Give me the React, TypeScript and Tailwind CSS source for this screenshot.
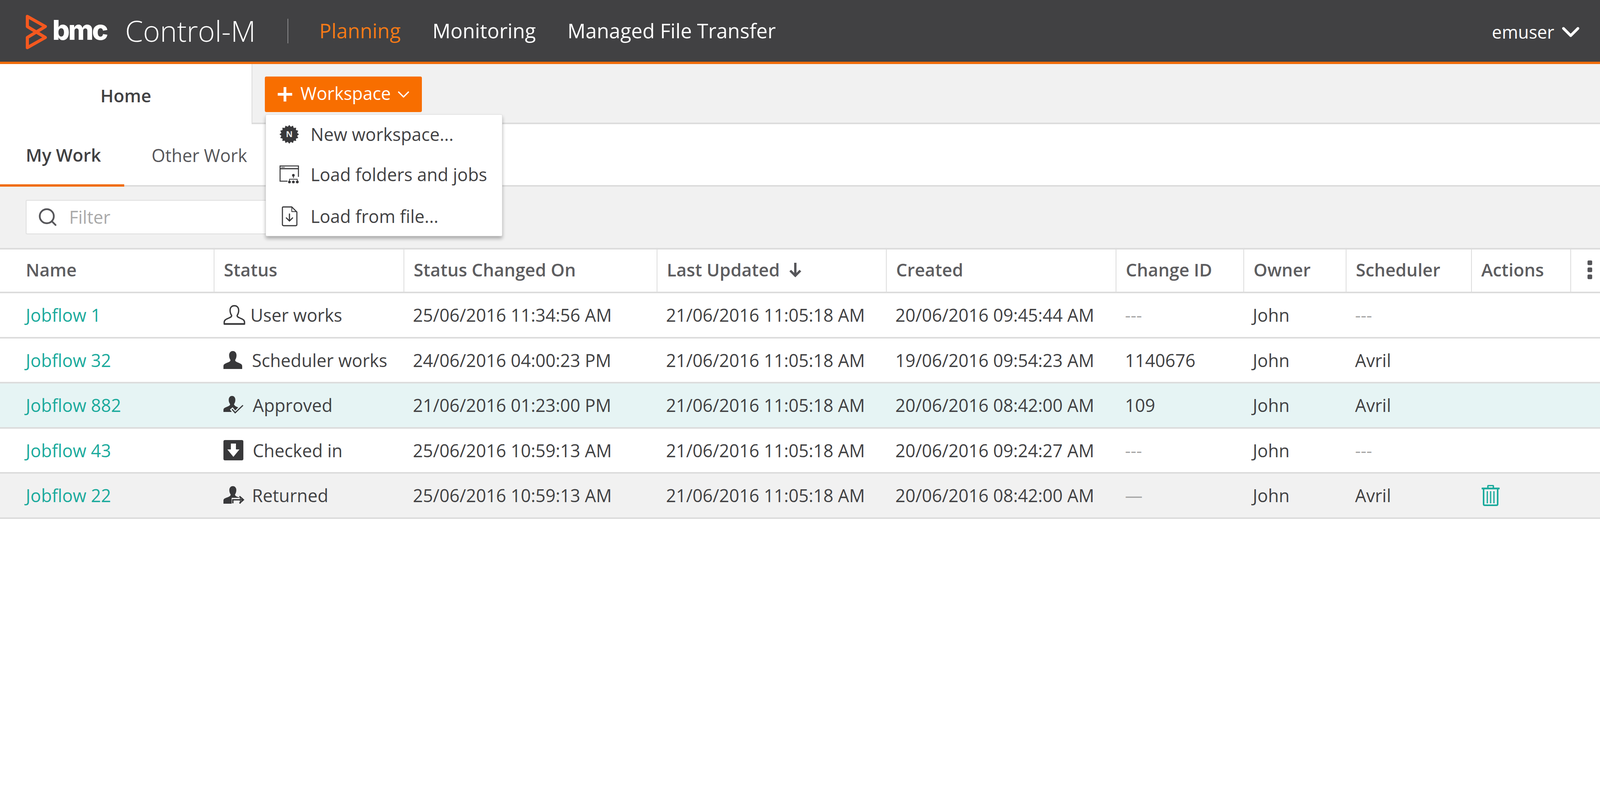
import React from 'react';
import { ChevronDown, Search } from 'lucide-react';

const dark = '#38383a';

function Logo() {
  return (
    <svg viewBox="0 0 58 96" className="w-[58px] h-[96px] shrink-0 mt-[10px]" fill="none" stroke="#f4581f" strokeWidth="8" strokeLinejoin="round">
      <path d="M6 6 L52 32 L6 60 L6 86 L52 60 L6 32 Z" />
    </svg>
  );
}

function Starburst() {
  const points: string[] = [];
  for (let i = 0; i < 32; i++) {
    const r = i % 2 === 0 ? 25 : 20.5;
    const a = (i * Math.PI) / 16;
    points.push(`${25.5 + r * Math.sin(a)},${24 - r * Math.cos(a) * 0.96}`);
  }
  return (
    <svg viewBox="0 0 51 48" className="w-[51px] h-[48px]">
      <polygon points={points.join(' ')} fill={dark} />
      <text x="25.5" y="31" textAnchor="middle" fontSize="21" fontWeight="700" fill="#e8e8e8" fontFamily="Open Sans, sans-serif">N</text>
    </svg>
  );
}

function WindowTree() {
  return (
    <svg viewBox="0 0 51 48" className="w-[51px] h-[48px]" fill="none" stroke={dark} strokeWidth="2.6">
      <path d="M21 41 H2 V2 H49 V30" />
      <path d="M2 9 H49" strokeWidth="3" />
      <path d="M5 5.5 H14" strokeWidth="1.4" />
      <path d="M36 24 V33 M26 41 V36 H46 V41" strokeWidth="1.8" />
      <g fill={dark} stroke="none">
        <circle cx="36" cy="26" r="3.4" />
        <circle cx="26" cy="43" r="3.6" />
        <circle cx="36" cy="43" r="3.6" />
        <circle cx="46" cy="43" r="3.6" />
      </g>
    </svg>
  );
}

function FileIn() {
  return (
    <svg viewBox="0 0 42 52" className="w-[42px] h-[52px]" fill="none" stroke={dark} strokeWidth="2.8" strokeLinejoin="round">
      <path d="M3 4 Q3 2 5 2 H27 L40 15 V47 Q40 50 37 50 H6 Q3 50 3 47 Z" />
      <path d="M27 3 V14 H39" strokeWidth="2" />
      <path d="M21 20 V37 M13 30 L21 38 L29 30" strokeWidth="3" strokeLinecap="round" />
    </svg>
  );
}

const userPath =
  'M28 2 C20 2 17 8 17 14 C17 20 19 24 21 27 C21 30 19 31 15 33 C8 36 2 38 2 44 V49 H54 V44 C54 38 48 36 41 33 C37 31 35 30 35 27 C37 24 39 20 39 14 C39 8 36 2 28 2 Z';

const solidPath =
  'M24 0 C17 0 14.500 6 14.500 11 C14.500 16 16 20 18 23 C18 26 16 27.500 12 29 C5 32 0 33 0 39 V46 H48 V39 C48 33 43 32 36 29 C32 27.500 30 26 30 23 C32 20 33.500 16 33.500 11 C33.500 6 31 0 24 0 Z';

function UserOutline() {
  return (
    <svg viewBox="0 0 56 51" className="w-[56px] h-[51px]" fill="none" stroke={dark} strokeWidth="3.4" strokeLinejoin="round">
      <path d={userPath} />
      <path d="M2 48.500 H54" strokeWidth="4" />
    </svg>
  );
}

function UserSolid() {
  return (
    <svg viewBox="0 0 48 46" className="w-[48px] h-[46px]">
      <path d={solidPath} fill={dark} />
    </svg>
  );
}

function UserApproved() {
  return (
    <svg viewBox="0 0 52 48" className="w-[52px] h-[48px]">
      <path d="M22 0 C16 0 13.500 5 13.500 10 C13.500 15 15 18 17 21 C17 24 15 25 11 27 C5 29.500 0 31 0 36 V41 H40 V30 C34 28 28 26 27 21 C29 18 30.500 15 30.500 10 C30.500 5 28 0 22 0 Z" fill={dark} />
      <path d="M20 32 L30 44 L50 23" fill="none" stroke="#e6f4f4" strokeWidth="9" />
      <path d="M22 34 L30 43 L50 24" fill="none" stroke={dark} strokeWidth="3" />
    </svg>
  );
}

function SquareDown() {
  return (
    <svg viewBox="0 0 51 52" className="w-[51px] h-[52px]">
      <rect x="0" y="0" width="51" height="52" rx="4" fill={dark} />
      <path d="M19 9 H32 V24 H41 L25.500 43 L10 24 H19 Z" fill="#fff" />
    </svg>
  );
}

function UserReturned() {
  return (
    <svg viewBox="0 0 55 47" className="w-[55px] h-[47px]">
      <path d="M24 0 C18 0 15 5 15 10 C15 15 16.500 18.500 18.500 21.500 C18.500 24.500 16.500 26 12 28 C5 30.500 0 32 0 37 V45 H44 V30 C36 28 30 26 29.500 21.500 C31.500 18.500 33 15 33 10 C33 5 30 0 24 0 Z" fill={dark} />
      <path d="M21 30 H42 V48 H21 Z" fill="#f1f1f1" />
      <path d="M24 44 V35 H50 M41 26 L51 35 L41 44" fill="none" stroke={dark} strokeWidth="3.6" />
    </svg>
  );
}

function Trash() {
  return (
    <svg viewBox="0 0 46 54" className="w-[46px] h-[54px]" fill="none" stroke="#1aaa9c" strokeWidth="3.6">
      <path d="M16 7 V3 Q16 1.500 18 1.500 H28 Q30 1.500 30 3 V7" />
      <path d="M1 9 H45" strokeWidth="4.500" strokeLinecap="round" />
      <path d="M5 11 V49 Q5 52 8 52 H38 Q41 52 41 49 V11" strokeWidth="4" />
      <path d="M14.500 16 V47 M23 16 V47 M31.500 16 V47" strokeWidth="3.200" />
    </svg>
  );
}

const columns = 'grid grid-cols-[547px_486px_648px_587px_588px_327px_262px_321px_254px_92px]';

const headers = ['Name', 'Status', 'Status Changed On', 'Last Updated', 'Created', 'Change ID', 'Owner', 'Scheduler', 'Actions'];

type Row = {
  name: string;
  icon: React.ReactNode;
  iconBox: string;
  status: string;
  changed: string;
  created: string;
  changeId: string;
  scheduler: string;
  bg: string;
  trash?: boolean;
};

const rows: Row[] = [
  { name: 'Jobflow 1', icon: <UserOutline />, iconBox: 'w-[69px]', status: 'User works', changed: '25/06/2016 11:34:56 AM', created: '20/06/2016 09:45:44 AM', changeId: '---', scheduler: '---', bg: 'bg-white' },
  { name: 'Jobflow 32', icon: <UserSolid />, iconBox: 'w-[73px]', status: 'Scheduler works', changed: '24/06/2016 04:00:23 PM', created: '19/06/2016 09:54:23 AM', changeId: '1140676', scheduler: 'Avril', bg: 'bg-white' },
  { name: 'Jobflow 882', icon: <UserApproved />, iconBox: 'w-[75px]', status: 'Approved', changed: '21/06/2016 01:23:00 PM', created: '20/06/2016 08:42:00 AM', changeId: '109', scheduler: 'Avril', bg: 'bg-[#e6f4f4]' },
  { name: 'Jobflow 43', icon: <SquareDown />, iconBox: 'w-[75px]', status: 'Checked in', changed: '25/06/2016 10:59:13 AM', created: '20/06/2016 09:24:27 AM', changeId: '---', scheduler: '---', bg: 'bg-white' },
  { name: 'Jobflow 22', icon: <UserReturned />, iconBox: 'w-[73px]', status: 'Returned', changed: '25/06/2016 10:59:13 AM', created: '20/06/2016 08:42:00 AM', changeId: '—', scheduler: 'Avril', bg: 'bg-[#f1f1f1]', trash: true },
];

function Empty({ value }: { value: string }) {
  const blank = value === '---' || value === '—';
  return <span className={blank ? 'text-[#a5a5a5]' : ''}>{value}</span>;
}

function MenuItem({ icon, label, height }: { icon: React.ReactNode; label: string; height: string }) {
  return (
    <div className={`flex items-center pl-[34px] ${height}`}>
      <span className="w-[80px] flex justify-start shrink-0">{icon}</span>
      <span>{label}</span>
    </div>
  );
}

export default function App() {
  return (
    <div className="min-h-screen bg-white font-['Open_Sans',sans-serif] text-[45px] text-[#414143]">
      <header className="h-[164px] box-border border-b-[6px] border-[#f06c0a] bg-[#414143] flex items-center text-white">
        <div className="ml-[64px] flex items-center">
          <Logo />
          <span className="ml-[12px] font-['Inter',sans-serif] font-extrabold text-[70px] leading-none tracking-[-4px] mb-[4px]">bmc</span>
        </div>
        <span className="ml-[47px] text-[74px] font-light leading-none">Control-M</span>
        <span className="ml-[81px] w-[2px] h-[63px] bg-[#8a8a8c]" />
        <nav className="ml-[80px] flex items-center gap-[81px] text-[51.500px]">
          <span className="text-[#f87a17]">Planning</span>
          <span>Monitoring</span>
          <span>Managed File Transfer</span>
        </nav>
        <div className="ml-auto mr-[38px] mt-[6px] flex items-center gap-[5px]">
          <span>emuser</span>
          <ChevronDown className="w-[74px] h-[74px]" strokeWidth={2.2} />
        </div>
      </header>

      <div className="h-[154px] flex">
        <div className="w-[644px] h-full bg-white flex items-center justify-center font-semibold pt-[8px]">Home</div>
        <div className="relative flex-1 bg-[#f1f1f1] border-l-[2px] border-b-[4px] border-[#dcdcdc]">
          <button className="absolute left-[32px] top-[32px] h-[91px] w-[402px] rounded-[4px] bg-[#f86e00] text-white flex items-center pl-[33px]">
            <svg viewBox="0 0 37 37" className="w-[37px] h-[37px]" fill="#fff">
              <path d="M15 0 H22 V15 H37 V22 H22 V37 H15 V22 H0 V15 H15 Z" />
            </svg>
            <span className="ml-[21px] -mt-[6px]">Workspace</span>
            <ChevronDown className="ml-[8px] w-[50px] h-[50px]" strokeWidth={1.6} />
          </button>
          <div className="absolute z-10 left-[34px] top-[129px] w-[606px] h-[312px] bg-white rounded-[3px] border border-[#dedede] shadow-[0_6px_10px_rgba(0,0,0,0.3)]">
            <MenuItem height="h-[99px]" icon={<Starburst />} label="New workspace..." />
            <MenuItem height="h-[108px]" icon={<WindowTree />} label="Load folders and jobs" />
            <MenuItem height="h-[105px]" icon={<span className="pl-[5px] block"><FileIn /></span>} label="Load from file..." />
          </div>
        </div>
      </div>

      <div className="h-[160px] flex items-stretch border-b-[4px] border-[#dcdcdc] box-border">
        <div className="w-[318px] pl-[66px] pt-[3px] flex items-center font-semibold border-b-[6px] border-[#f06c0a] -mb-[4px]">My Work</div>
        <div className="pl-[70px] pt-[3px] flex items-center text-[#56565a]">Other Work</div>
      </div>

      <div className="h-[157px] bg-[#f1f1f1] pt-[34px] pl-[66px]">
        <div className="w-[660px] h-[88px] bg-white border-[2px] border-[#dedede] rounded-[3px] flex items-center pl-[27px] text-[#a9a9a9]">
          <Search className="w-[54px] h-[54px] text-[#56565a]" strokeWidth={2} />
          <span className="ml-[28px]">Filter</span>
        </div>
      </div>

      <div className={`${columns} h-[116px] box-border border-y-[4px] border-[#dcdcdc] font-semibold text-[#5d5d60]`}>
        {headers.map((h, i) => (
          <div key={h} className={`flex items-center pb-[5px] ${i === 0 ? 'pl-[66px]' : 'pl-[24px] border-l-[2px] border-[#dcdcdc]'}`}>
            {h}
            {h === 'Last Updated' && (
              <svg viewBox="0 0 32 38" className="ml-[24px] w-[32px] h-[38px]" fill="none" stroke="#56565a" strokeWidth="6">
                <path d="M16 1 V34 M3 21 L16 34 L29 21" />
              </svg>
            )}
          </div>
        ))}
        <div className="flex items-center justify-center pb-[5px] pl-[6px] border-l-[2px] border-[#dcdcdc]">
          <svg viewBox="0 0 12 48" className="w-[12px] h-[48px]" fill="#56565a">
            <rect x="0" y="0" width="12" height="12" rx="3" />
            <rect x="0" y="18" width="12" height="12" rx="3" />
            <rect x="0" y="36" width="12" height="12" rx="3" />
          </svg>
        </div>
      </div>

      {rows.map((r) => (
        <div key={r.name} className={`${columns} h-[115.500px] box-border border-b-[4px] border-[#dcdcdc] ${r.bg}`}>
          <div className="pl-[66px] flex items-center text-[#1aaa9c]">{r.name}</div>
          <div className="pl-[25px] flex items-center">
            <span className={`${r.iconBox} shrink-0 flex`}>{r.icon}</span>
            {r.status}
          </div>
          <div className="pl-[24px] flex items-center">{r.changed}</div>
          <div className="pl-[24px] flex items-center">21/06/2016 11:05:18 AM</div>
          <div className="pl-[24px] flex items-center">{r.created}</div>
          <div className="pl-[24px] flex items-center"><Empty value={r.changeId} /></div>
          <div className="pl-[24px] flex items-center">John</div>
          <div className="pl-[24px] flex items-center"><Empty value={r.scheduler} /></div>
          <div className="pl-[27px] flex items-center">{r.trash && <Trash />}</div>
          <div />
        </div>
      ))}
    </div>
  );
}
